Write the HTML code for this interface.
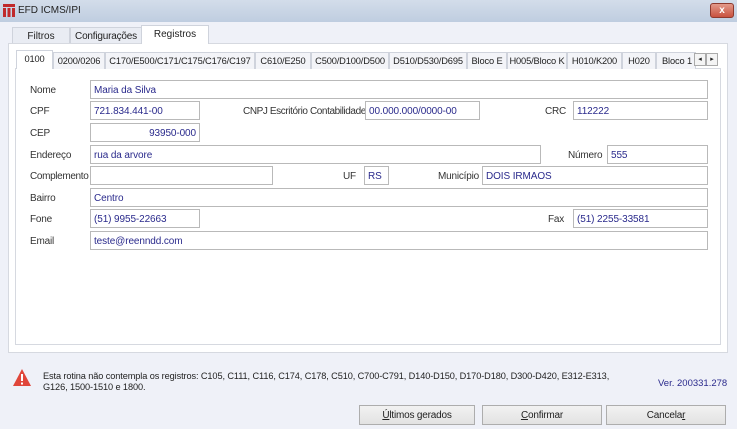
<!DOCTYPE html>
<html><head><meta charset="utf-8"><style>
*{box-sizing:border-box;margin:0;padding:0}
body{width:737px;height:429px;overflow:hidden;background:#eff1f8;font-family:"Liberation Sans",sans-serif;font-size:10px;color:#222;position:relative}
.a{position:absolute;white-space:nowrap}
.title{left:0;top:0;width:737px;height:22px;background:linear-gradient(#d3ddea,#bfcde0);}
.inp{position:absolute;height:19px;background:#fff;border:1px solid #b9b9b9;color:#2a2a8c;padding:4px 0 0 3px;white-space:nowrap;font-size:10px;letter-spacing:-0.1px}
.lbl{position:absolute;white-space:nowrap;color:#333;font-size:10px;letter-spacing:-0.2px;margin-top:1px}
.tab{position:absolute;top:52px;height:17px;border:1px solid #cfd3dc;border-bottom:none;background:#f3f4f8;padding:3px 0 0 0;text-align:center;font-size:9.3px;letter-spacing:-0.15px;white-space:nowrap;overflow:hidden}
.btn{position:absolute;top:405px;height:20px;border:1px solid #adadad;background:linear-gradient(#f2f2f2,#e2e2e2);text-align:center;padding-top:4px;font-size:10px;letter-spacing:-0.2px}
</style></head><body>
<div class="a title"></div>
<svg class="a" style="left:3px;top:4px" width="12" height="13" viewBox="0 0 12 13"><rect x="0" y="0" width="12" height="3" fill="#c0292b"/><rect x="0" y="4" width="3" height="9" fill="#c0292b"/><rect x="4.5" y="4" width="3" height="9" fill="#c0292b"/><rect x="9" y="4" width="3" height="9" fill="#c0292b"/></svg>
<div class="a" style="left:18px;top:5px;font-size:10px;color:#222">EFD ICMS/IPI</div>
<div class="a" style="left:710px;top:3px;width:24px;height:15px;background:linear-gradient(#e39a8a,#c9523f);border:1px solid #8e3a2e;border-radius:3px;color:#fff;text-align:center;font-weight:bold;font-size:10px;line-height:13px">x</div>

<div class="a" style="left:12px;top:27px;width:58px;height:17px;border:1px solid #cfd3dc;background:#e9ecf3;text-align:center;padding-top:3px;font-size:10px">Filtros</div>
<div class="a" style="left:70px;top:27px;width:72px;height:17px;border:1px solid #cfd3dc;background:#e9ecf3;text-align:center;padding-top:3px;font-size:10px;letter-spacing:-0.2px">Configurações</div>
<div class="a" style="left:8px;top:43px;width:720px;height:310px;background:#fff;border:1px solid #d6d9e0"></div>
<div class="a" style="left:141px;top:25px;width:68px;height:19px;border:1px solid #cfd3dc;border-bottom:none;background:#fff;text-align:center;padding-top:3px;font-size:10px">Registros</div>

<div class="a" style="left:15px;top:68px;width:706px;height:277px;background:#fff;border:1px solid #d6d9e0"></div>
<div class="tab" style="left:16px;top:50px;height:19px;width:37px;background:#fff">0100</div>
<div class="tab" style="left:53px;width:52px">0200/0206</div>
<div class="tab" style="left:105px;width:150px">C170/E500/C171/C175/C176/C197</div>
<div class="tab" style="left:255px;width:56px">C610/E250</div>
<div class="tab" style="left:311px;width:78px">C500/D100/D500</div>
<div class="tab" style="left:389px;width:78px">D510/D530/D695</div>
<div class="tab" style="left:467px;width:40px">Bloco E</div>
<div class="tab" style="left:507px;width:60px">H005/Bloco K</div>
<div class="tab" style="left:567px;width:55px">H010/K200</div>
<div class="tab" style="left:622px;width:34px">H020</div>
<div class="tab" style="left:656px;width:40px;text-align:left;padding-left:5px">Bloco 1</div>
<div class="a" style="left:694px;top:53px;width:12px;height:13px;border:1px solid #aaa;background:#f4f4f4;font-size:7px;text-align:center;line-height:11px">◂</div>
<div class="a" style="left:706px;top:53px;width:12px;height:13px;border:1px solid #aaa;background:#f4f4f4;font-size:7px;text-align:center;line-height:11px">▸</div>

<div class="lbl" style="left:30px;top:84px">Nome</div><div class="inp" style="left:90px;top:80px;width:618px">Maria da Silva</div>
<div class="lbl" style="left:30px;top:105px">CPF</div><div class="inp" style="left:90px;top:101px;width:110px">721.834.441-00</div>
<div class="lbl" style="left:243px;top:105px;letter-spacing:-0.4px">CNPJ Escritório Contabilidade</div><div class="inp" style="left:365px;top:101px;width:115px">00.000.000/0000-00</div>
<div class="lbl" style="left:545px;top:105px">CRC</div><div class="inp" style="left:573px;top:101px;width:135px">112222</div>
<div class="lbl" style="left:30px;top:127px">CEP</div><div class="inp" style="left:90px;top:123px;width:110px;text-align:right;padding-right:3px">93950-000</div>
<div class="lbl" style="left:30px;top:149px">Endereço</div><div class="inp" style="left:90px;top:145px;width:451px">rua da arvore</div>
<div class="lbl" style="left:568px;top:149px">Número</div><div class="inp" style="left:607px;top:145px;width:101px">555</div>
<div class="lbl" style="left:30px;top:170px;letter-spacing:-0.35px">Complemento</div><div class="inp" style="left:90px;top:166px;width:183px"></div>
<div class="lbl" style="left:343px;top:170px">UF</div><div class="inp" style="left:364px;top:166px;width:25px">RS</div>
<div class="lbl" style="left:438px;top:170px">Município</div><div class="inp" style="left:482px;top:166px;width:226px">DOIS IRMAOS</div>
<div class="lbl" style="left:30px;top:192px">Bairro</div><div class="inp" style="left:90px;top:188px;width:618px">Centro</div>
<div class="lbl" style="left:30px;top:213px">Fone</div><div class="inp" style="left:90px;top:209px;width:110px">(51) 9955-22663</div>
<div class="lbl" style="left:548px;top:213px">Fax</div><div class="inp" style="left:573px;top:209px;width:135px">(51) 2255-33581</div>
<div class="lbl" style="left:30px;top:235px">Email</div><div class="inp" style="left:90px;top:231px;width:618px">teste@reenndd.com</div>

<svg class="a" style="left:12px;top:368px" width="20" height="19" viewBox="0 0 20 19"><path d="M10 1 L19 18 L1 18 Z" fill="#e0463a"/><rect x="9" y="6" width="2" height="7" fill="#fff"/><rect x="9" y="14.5" width="2" height="2" fill="#fff"/></svg>
<div class="a" style="left:43px;top:371px;font-size:9.2px;line-height:11px;color:#222;letter-spacing:-0.1px">Esta rotina não contempla os registros: C105, C111, C116, C174, C178, C510, C700-C791, D140-D150, D170-D180, D300-D420, E312-E313,<br>G126, 1500-1510 e 1800.</div>
<div class="a" style="left:658px;top:378px;font-size:9.5px;color:#2a2a8c">Ver. 200331.278</div>

<div class="btn" style="left:359px;width:116px"><u>Ú</u>ltimos gerados</div>
<div class="btn" style="left:482px;width:120px"><u>C</u>onfirmar</div>
<div class="btn" style="left:606px;width:120px">Cancela<u>r</u></div>
</body></html>
